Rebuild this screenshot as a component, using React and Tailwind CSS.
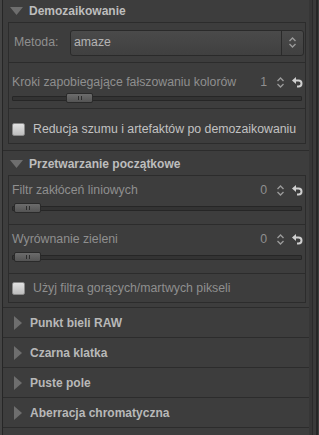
import React from "react";

const font = { fontFamily: '"Liberation Sans", Arial, sans-serif' };

// małe ikony
function Tri({ open }) {
  return open ? (
    <svg width="13" height="9" viewBox="0 0 13 9" className="shrink-0">
      <path d="M0 0 H13 L6.5 8 Z" fill="#6e6e6e" />
    </svg>
  ) : (
    <svg width="8" height="14" viewBox="0 0 8 14" className="shrink-0">
      <path d="M0 0 L8 7 L0 14 Z" fill="#6e6e6e" />
    </svg>
  );
}

function Spin() {
  return (
    <svg width="9" height="13" viewBox="0 0 9 13" className="shrink-0">
      <path d="M1.5 5 L4.5 2 L7.5 5 M1.5 8 L4.5 11 L7.5 8" stroke="#9a9a9a" strokeWidth="1.4" fill="none" />
    </svg>
  );
}

function Undo() {
  return (
    <svg width="11" height="12" viewBox="0 0 11 12" className="shrink-0">
      <path d="M3.5 4.5 H6.5 A3 3 0 0 1 6.5 10.5 H5" stroke="#d0d0d0" strokeWidth="2" fill="none" />
      <path d="M0 4.5 L4 1 V8 Z" fill="#d0d0d0" />
    </svg>
  );
}

function Slider({ pos }) {
  return (
    <div className="relative h-[11px] mr-[1px]">
      <div className="absolute left-0 right-0 top-[3px] h-[5px] border border-[#262626] bg-[#333] rounded-[1px]" />
      <div
        className="absolute top-0 h-[10px] w-[27px] rounded-[2px] border border-[#2a2a2a] bg-gradient-to-b from-[#6c6c6c] to-[#545454] flex items-center justify-center gap-[2px]"
        style={{ left: pos }}
      >
        <span className="w-px h-[4px] bg-[#2c2c2c]" />
        <span className="w-px h-[4px] bg-[#2c2c2c]" />
      </div>
    </div>
  );
}

function Adjuster({ label, value, pos, pt, gap, pb }) {
  return (
    <div className="pl-[3px] pr-[2px]" style={{ paddingTop: pt, paddingBottom: pb }}>
      <div className="flex items-center h-[16px] text-[12.3px] text-[#8f8f8f]">
        <span className="flex-1">{label}</span>
        <span className="mr-[9px]">{value}</span>
        <Spin />
        <span className="ml-[7px]"><Undo /></span>
      </div>
      <div style={{ height: gap }} />
      <Slider pos={pos} />
    </div>
  );
}

function Check({ label, light, h, pt }) {
  return (
    <div className="flex items-center gap-[8px] px-[3px]" style={{ height: h, paddingTop: pt }}>
      <span className="w-[13px] h-[13px] rounded-[2px] bg-gradient-to-b from-[#e2e2e2] to-[#bdbdbd] border border-[#8a8a8a]" />
      <span className={`text-[12.3px] ${light ? "text-[#c2c2c2]" : "text-[#8f8f8f]"}`}>{label}</span>
    </div>
  );
}

function Header({ title, open, h, pt = 0 }) {
  return (
    <div className="flex items-center pl-[6px] gap-[6px]" style={{ height: h, paddingTop: pt }}>
      <span className="w-[14px] flex justify-center"><Tri open={open} /></span>
      <span className="text-[12px] font-bold text-[#bdbdbd]">{title}</span>
    </div>
  );
}

function Collapsed({ title }) {
  return (
    <div className="border-t border-[#2c2c2c] h-[30px] flex items-center pl-[11px] gap-[8px]">
      <Tri />
      <span className="text-[12px] font-bold text-[#b8b8b8]">{title}</span>
    </div>
  );
}

export default function App() {
  return (
    <div className="w-[319px] h-[435px] bg-[#3d3d3d] flex overflow-hidden" style={font}>
      <div className="w-[2px] bg-[#444]" />
      <div className="flex-1 border-l border-[#262626] flex flex-col">
        <Header title="Demozaikowanie" open h={22} />
        <div className="ml-[5px] mr-[3px] border border-[#2c2c2c]">
          <div className="flex items-center h-[39px] pl-[5px] pr-[1px]">
            <span className="text-[12.3px] text-[#8f8f8f] w-[56px]">Metoda:</span>
            <div className="flex-1 h-[26px] rounded-[3px] border border-[#2a2a2a] bg-gradient-to-b from-[#4a4a4a] to-[#404040] flex items-center">
              <span className="flex-1 pl-[3px] text-[12.3px] text-[#b4b4b4]">amaze</span>
              <span className="w-px h-[24px] bg-[#2a2a2a]" />
              <span className="w-[21px] flex justify-center"><Spin /></span>
            </div>
          </div>
          <div className="border-t border-[#2c2c2c]">
            <Adjuster label="Kroki zapobiegające fałszowaniu kolorów" value="1" pos={54} pt={11} gap={3} pb={4} />
          </div>
          <div className="border-t border-[#2c2c2c]">
            <Check label="Reducja szumu i artefaktów po demozaikowaniu" light h={34} pt={6} />
          </div>
        </div>
        <div className="h-[6px]" />
        <div className="border-t border-[#2c2c2c]">
          <Header title="Przetwarzanie początkowe" open h={24} pt={2} />
        </div>
        <div className="ml-[5px] mr-[3px] border border-[#2c2c2c]">
          <Adjuster label="Filtr zakłóceń liniowych" value="0" pos={2} pt={6} gap={5} pb={10} />
          <div className="border-t border-[#2c2c2c]">
            <Adjuster label="Wyrównanie zieleni" value="0" pos={2} pt={6} gap={5} pb={10} />
          </div>
          <div className="border-t border-[#2c2c2c]">
            <Check label="Użyj filtra gorących/martwych pikseli" h={28} pt={0} />
          </div>
        </div>
        <div className="h-[4px]" />
        <Collapsed title="Punkt bieli RAW" />
        <Collapsed title="Czarna klatka" />
        <Collapsed title="Puste pole" />
        <Collapsed title="Aberracja chromatyczna" />
        <div className="border-t border-[#2c2c2c]" />
      </div>
      <div className="w-[10px] flex">
        <div className="w-[3px] bg-[#363636]" />
        <div className="w-px bg-[#2a2a2a]" />
        <div className="w-[3px] bg-[#3a3a3a]" />
        <div className="w-[2px] bg-[#262626]" />
        <div className="w-px bg-[#3d3d3d]" />
      </div>
    </div>
  );
}
